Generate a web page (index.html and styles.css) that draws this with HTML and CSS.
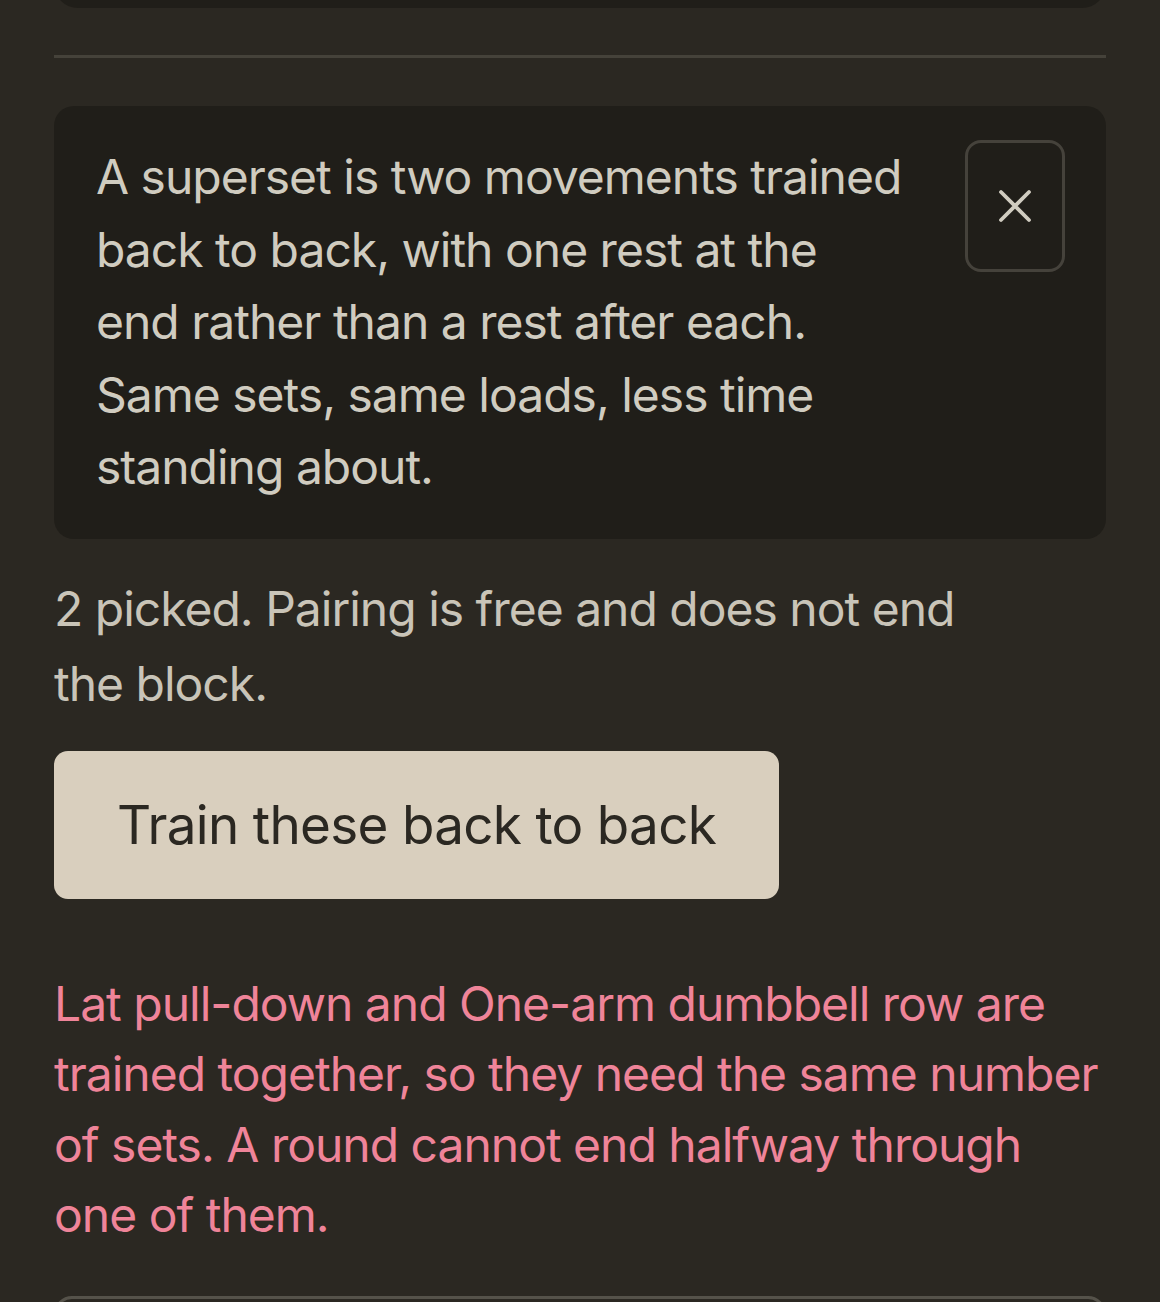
FILE: index.html
```html
<!DOCTYPE html>
<html lang="en">
<head>
<meta charset="utf-8">
<title>Superset</title>
<link rel="stylesheet" href="styles.css">
</head>
<body>
<main class="page">
  <div class="prev-card"></div>
  <hr class="divider">

  <section class="info-card">
    <p class="info-text">A superset is two movements trained back to back, with one rest at the end rather than a rest after each. Same sets, same loads, less time standing about.</p>
    <button class="close-btn" type="button" aria-label="Dismiss">
      <svg viewBox="0 0 34 34" width="34" height="34" aria-hidden="true">
        <path d="M3 3 L31 31 M31 3 L3 31" stroke="currentColor" stroke-width="3.8" stroke-linecap="round" fill="none"/>
      </svg>
    </button>
  </section>

  <p class="status">2 picked. Pairing is free and does not end the block.</p>

  <button class="primary-btn" type="button">Train these back to back</button>

  <p class="warning">Lat pull-down and One-arm dumbbell row are trained together, so they need the same number of sets. A round cannot end halfway through one of them.</p>

  <div class="next-card"></div>
</main>
</body>
</html>
```

FILE: styles.css
```css
html, body {
  margin: 0;
  padding: 0;
  background: #2b2822;
}

body {
  font-family: Inter, "Noto Sans", "Liberation Sans", sans-serif;
  color: #cfcabd;
  letter-spacing: -1px;
  height: 1302px;
  overflow: hidden;
}

.page {
  padding: 0 54px;
}

/* bottom edge of the card above, scrolled mostly out of view */
.prev-card {
  height: 100px;
  margin-top: -92px;
  background: #201e19;
  border-radius: 0 0 24px 24px;
}

.divider {
  margin: 47px 0 0;
  border: 0;
  height: 3px;
  background: #45423a;
}

.info-card {
  margin-top: 48px;
  background: #201e19;
  border-radius: 20px;
  padding: 34px 41px 35px 42px;
  display: flex;
  align-items: flex-start;
  gap: 60px;
}

.info-text {
  margin: 0;
  flex: 1;
  font-size: 48px;
  line-height: 72.5px;
  color: #d0ccc0;
  padding-top: 1px;
}

.close-btn {
  flex: none;
  width: 100px;
  height: 132px;
  background: transparent;
  border: 3px solid #45423b;
  border-radius: 16px;
  color: #d0ccc0;
  display: flex;
  align-items: center;
  justify-content: center;
  padding: 0;
}

.close-btn svg {
  display: block;
}

.status {
  margin: 32px 0 0;
  max-width: 950px;
  font-size: 48px;
  line-height: 75px;
  color: #c9c4b8;
}

.primary-btn {
  display: block;
  margin-top: 30px;
  height: 148px;
  padding: 0 63px;
  background: #d9cfbe;
  color: #2b2822;
  border: 0;
  border-radius: 14px;
  font-family: inherit;
  font-size: 53px;
  letter-spacing: -0.7px;
}

.warning {
  margin: 70px 0 0;
  font-size: 48px;
  line-height: 70.5px;
  color: #ef8499;
}

.next-card {
  margin-top: 45px;
  height: 120px;
  border: 3px solid #55524a;
  border-radius: 18px;
}
```
